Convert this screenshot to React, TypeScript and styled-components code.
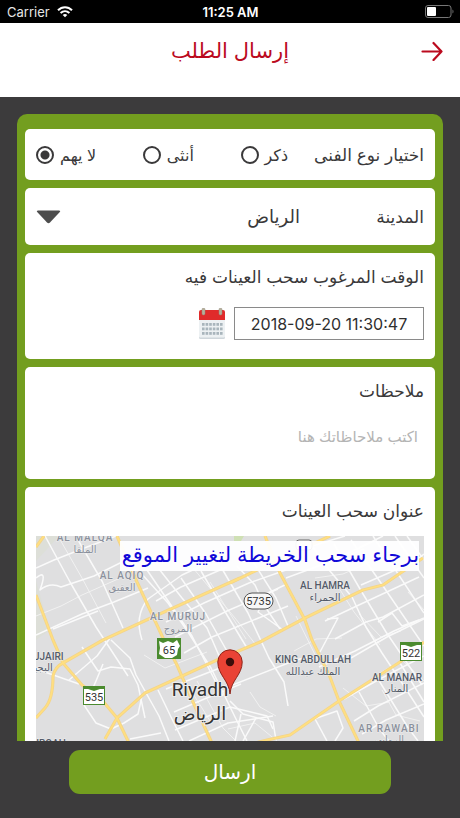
import React, { useState } from 'react';
import styled, { createGlobalStyle } from 'styled-components';

const colors = {
  green: '#739e1f',
  dark: '#3c3b3c',
  red: '#bb0a1e',
  ink: '#3a393a',
  placeholder: '#b4b4b4',
  link: '#1008d8',
};

const GlobalStyle = createGlobalStyle`
  *, *::before, *::after { box-sizing: border-box; }
  body { margin: 0; background: ${colors.dark}; }
  button, input, select, textarea { font: inherit; color: inherit; }
`;

const Screen = styled.div`
  display: flex;
  flex-direction: column;
  height: 100vh;
  overflow: hidden;
  background: ${colors.dark};
  color: ${colors.ink};
  font-family: Inter, 'Noto Sans', 'DejaVu Sans', sans-serif;
  font-size: 17px;
  line-height: 24px;
`;

const StatusBar = styled.div`
  display: grid;
  grid-template-columns: 1fr auto 1fr;
  align-items: center;
  flex: none;
  height: 23px;
  padding: 0 6px 0 7px;
  background: #000;
  color: #fff;
  font-size: 13px;
  line-height: 20px;
`;

const Carrier = styled.span`
  display: flex;
  align-items: center;
  gap: 7px;
  color: #e6e6e6;
`;

const Clock = styled.span`
  font-weight: 600;
`;

const BatteryIcon = styled.svg`
  justify-self: end;
`;

const Header = styled.header`
  display: grid;
  grid-template-columns: 40px 1fr 40px;
  align-items: start;
  flex: none;
  height: 74px;
  padding: 10px 8px;
  background: #fff;
  color: ${colors.red};
`;

const Title = styled.h1`
  grid-column: 2;
  margin: 0;
  text-align: center;
  font-size: 21px;
  font-weight: 400;
  line-height: 36px;
`;

const IconButton = styled.button`
  display: flex;
  align-items: center;
  justify-content: center;
  flex: none;
  padding: 0;
  border: 0;
  background: none;
  cursor: pointer;
`;

const BackButton = styled(IconButton)`
  height: 36px;
`;

const Content = styled.main`
  flex: 1;
  min-height: 0;
  overflow: hidden;
  padding: 17px 17px 0;
`;

const Form = styled.form`
  display: flex;
  flex-direction: column;
  gap: 8px;
  padding: 15px 8px;
  border-radius: 10px;
  background: ${colors.green};
`;

const Card = styled.section<{ $height?: number }>`
  display: flex;
  flex-direction: column;
  flex: none;
  min-height: ${({ $height }) => ($height ? `${$height}px` : 'auto')};
  padding: 12px 11px;
  border-radius: 5px;
  background: #fff;
`;

const RowCard = styled(Card)`
  flex-direction: row;
  align-items: center;
  padding: 0 11px;
`;

const FieldLabel = styled.label`
  display: block;
`;

const GenderLabel = styled.span`
  flex: none;
  margin-left: 26px;
`;

const RadioGroup = styled.div`
  display: flex;
  flex: 1;
  justify-content: space-between;
`;

const RadioOption = styled.label`
  display: flex;
  align-items: center;
  gap: 6px;
  font-size: 16px;
`;

const Radio = styled.input`
  appearance: none;
  width: 18px;
  height: 18px;
  margin: 0;
  border: 2px solid ${colors.ink};
  border-radius: 50%;
  background: #fff;

  &:checked {
    background: radial-gradient(circle, ${colors.ink} 0 4px, #fff 5px);
  }
`;

const CityLabel = styled.label`
  flex: none;
  width: 124px;
`;

const SelectBox = styled.div`
  display: grid;
  flex: 1;
  align-items: center;
`;

const CitySelect = styled.select`
  grid-area: 1 / 1;
  appearance: none;
  width: 100%;
  padding: 0;
  border: 0;
  background: none;
  font-size: 18px;
  line-height: 32px;
`;

const Caret = styled.svg`
  grid-area: 1 / 1;
  justify-self: end;
  pointer-events: none;
`;

const DateRow = styled.div`
  display: flex;
  align-items: center;
  gap: 8px;
  margin-top: 18px;
`;

const DateInput = styled.input`
  width: 190px;
  height: 33px;
  padding: 0;
  border: 1px solid #8a8a8a;
  background: #fff;
  color: #2f2f2f;
  text-align: center;
  font-size: 16px;
`;

const Notes = styled.textarea`
  flex: 1;
  margin-top: 22px;
  padding: 0 6px;
  border: 0;
  background: none;
  resize: none;
  outline: none;
  font-size: 15px;

  &::placeholder { color: ${colors.placeholder}; opacity: 1; }
`;

const MapFrame = styled.div`
  position: relative;
  height: 260px;
  margin-top: 13px;
  overflow: hidden;
  background: #e1e1e2;
`;

const MapHint = styled.p`
  position: absolute;
  top: 5px;
  right: 5px;
  margin: 0;
  padding: 0 0 2px 2px;
  background: #fffffff0;
  color: ${colors.link};
  font-size: 21px;
  line-height: 28px;
`;

const MapSvg = styled.svg`
  display: block;
  width: 100%;
  height: 100%;
`;

const Footer = styled.footer`
  display: flex;
  justify-content: center;
  flex: none;
  padding: 9px 69px 24px;
`;

const SubmitButton = styled.button`
  flex: 1;
  height: 44px;
  padding: 0;
  border: 0;
  border-radius: 11px;
  background: ${colors.green};
  color: #fff;
  font-size: 20px;
  line-height: 32px;
  cursor: pointer;
`;

const highways = [
  'M0 11L8 0',
  'M0 59L17 104L27 127L46 149L66 164L81 182L92 205L112 260',
  'M81 0L101 46L127 102L141 129L157 166L175 205L196 260',
  'M204 42L117 81L67 104L27 127Q19 131 17 140Q17 163 9 172L0 182',
  'M194 47L240 25L294 0',
  'M387 22L366 36L347 49L327 54L269 82L224 106L181 124L144 141L109 157L81 182L69 203',
  'M229 0L244 37L269 84L276 104L294 141L303 165L322 205L344 260',
  'M388 106L364 126L303 165L254 199L231 204L200 212',
];

const streets = [
  'M9 0L34 46L60 91L92 140',
  'M0 42Q12 32 4 54Q14 46 25 51L58 40L98 20',
  'M0 32L18 24L51 11L80 0',
  'M42 4L66 45L87 92',
  'M0 99L46 78L78 66L112 52',
  'M17 93L62 75',
  'M106 104Q98 80 112 63L146 39L174 26',
  'M104 36L132 67L152 96L175 132L199 181L211 205',
  'M111 34L139 75L156 100L187 160',
  'M123 33L146 62L171 92L184 122',
  'M145 42L170 78L196 124',
  'M165 35L188 74L211 112',
  'M185 31L212 77L233 122L248 146L252 170',
  'M120 65L145 51L191 31',
  'M130 86L168 67L213 47L250 34',
  'M139 101L191 75L242 53',
  'M148 117L176 101L252 70',
  'M194 150L260 124L277 120',
  'M0 133L43 148',
  'M33 144L61 120L74 102',
  'M46 111L62 135L75 131L94 133L102 149L109 182',
  'M48 169L60 187L75 193L88 187L102 178L106 160',
  'M67 128L60 145L53 161',
  'M75 104L94 122L100 139L123 180L133 205',
  'M122 154L135 181L147 205',
  'M130 153L184 132',
  'M138 176L166 164L205 148',
  'M139 194L194 171L231 180L237 193',
  'M153 205L192 187L237 180',
  'M194 165L207 178L237 186L240 204',
  'M205 178L199 205',
  'M220 182L207 205',
  'M251 48L232 57L222 76L247 94',
  'M201 30L219 49L228 69L244 93',
  'M216 24L240 62L252 90',
  'M239 26L269 12L309 0',
  'M250 42L288 28L323 12L347 0',
  'M277 11L288 28L316 61L330 91L346 117L366 147L388 181',
  'M298 8L324 53L350 96L386 149',
  'M315 4L347 50L388 110',
  'M337 0L388 77',
  'M359 0L388 42',
  'M371 0L388 24',
  'M288 29L328 13',
  'M325 49L378 26L388 18',
  'M289 85L325 68L383 41',
  'M299 103L330 86L347 81L388 59',
  'M315 122L351 101L388 83',
  'M283 131L319 115L358 95L388 82',
  'M291 83L302 82L284 116',
  'M342 86L356 77L366 90L383 84',
  'M308 163L342 144L388 120',
  'M318 185L342 170L388 147',
  'M326 198L350 184L388 168',
  'M323 156L344 194L353 205',
  'M342 143L371 190L382 205',
  'M364 127L388 166',
  'M278 181L291 205',
  'M278 183L301 175L307 192L299 205',
  'M94 203L125 197',
];

const minorRoads = [
  'M22 0L46 42L70 87',
  'M0 80L25 70L46 59L91 39',
  'M108 119L129 132L171 116',
  'M132 111L149 145L176 188',
  'M161 145L187 192L200 205',
  'M157 32L199 82L220 109',
  'M174 46L210 103',
  'M258 115L280 103L306 102',
  'M260 80L285 131',
  'M303 52L318 76L344 109',
  'M279 42L307 38L338 24',
  'M307 152L330 170L354 166',
  'M346 154L360 179L384 185',
  'M214 156L224 171L240 180',
  'M192 193L219 187L241 205',
  'M323 78L345 101L365 95',
  'M372 56L388 74',
  'M344 137L366 124L388 145',
];

interface Place {
  x: number;
  y: number;
  text: string;
  color: string;
  wide?: boolean;
}

const places: Place[] = [
  { x: 49, y: 5, text: 'AL MALQA', color: '#8a909c', wide: true },
  { x: 49, y: 17, text: 'الملقا', color: '#8a909c' },
  { x: 86, y: 43, text: 'AL AQIQ', color: '#8a909c', wide: true },
  { x: 86, y: 55, text: 'العقيق', color: '#8a909c' },
  { x: 142, y: 84, text: 'AL MURUJ', color: '#8a909c', wide: true },
  { x: 142, y: 96, text: 'المروج', color: '#8a909c' },
  { x: 289, y: 53, text: 'AL HAMRA', color: '#545b69' },
  { x: 289, y: 65, text: 'الحمراء', color: '#545b69' },
  { x: 6, y: 124, text: 'HUJJAIRI', color: '#545b69' },
  { x: 1, y: 135, text: 'البجيري', color: '#545b69' },
  { x: 277, y: 127, text: 'KING ABDULLAH', color: '#545b69' },
  { x: 277, y: 139, text: 'الملك عبدالله', color: '#545b69' },
  { x: 361, y: 145, text: 'AL MANAR', color: '#545b69' },
  { x: 361, y: 156, text: 'المنار', color: '#545b69' },
  { x: 353, y: 196, text: 'AR RAWABI', color: '#8a909c', wide: true },
  { x: 353, y: 207, text: 'الروابي', color: '#8a909c' },
  { x: 15, y: 211, text: 'IRQAH', color: '#545b69' },
];

const PlaceName = styled.text<{ $color: string; $wide?: boolean }>`
  fill: ${({ $color }) => $color};
  stroke: #ededed;
  stroke-width: 1px;
  paint-order: stroke;
  font-family: Roboto, 'Noto Sans', 'DejaVu Sans', sans-serif;
  font-size: 10px;
  font-weight: 500;
  letter-spacing: ${({ $wide }) => ($wide ? '1px' : 'normal')};
  text-anchor: middle;
`;

const CityName = styled.text<{ $size: number }>`
  fill: #333;
  stroke: #ededed;
  stroke-width: 2px;
  paint-order: stroke;
  font-family: Roboto, 'Noto Sans', 'DejaVu Sans', sans-serif;
  font-size: ${({ $size }) => $size}px;
  text-anchor: middle;
`;

const ShieldNumber = styled.text`
  fill: #333;
  font-family: Roboto, sans-serif;
  font-size: 11px;
  text-anchor: middle;
`;

function RiyadhMap() {
  return (
    <MapSvg viewBox="0 0 388 260" preserveAspectRatio="xMidYMin slice" direction="ltr" role="img" aria-label="Riyadh">
      <rect width="388" height="260" fill="#dfdfe0" />
      <path d="M0 0H23L0 25ZM0 45L14 94L0 104Z" fill="#dddfd8" />
      <path d="M198 0h10l-3 5h-7z" fill="#cfe0b4" />
      <g fill="none" stroke="#f1f1f1" strokeWidth="1">
        {minorRoads.map((d) => <path key={d} d={d} />)}
      </g>
      <g fill="none" stroke="#fafafa" strokeWidth="1.5" strokeLinejoin="round">
        {streets.map((d) => <path key={d} d={d} />)}
      </g>
      <g fill="none" stroke="#f3d48a" strokeWidth="3.2" strokeLinejoin="round">
        {highways.map((d) => <path key={d} d={d} />)}
      </g>
      <g fill="none" stroke="#ffdf80" strokeWidth="1.6" strokeLinejoin="round">
        {highways.map((d) => <path key={d} d={d} />)}
      </g>
      {places.map((p) => (
        <PlaceName key={p.text} x={p.x} y={p.y} $color={p.color} $wide={p.wide}>{p.text}</PlaceName>
      ))}
      <rect x="260" y="4" width="16" height="10" rx="3" fill="#fff" stroke="#666" />
      <rect x="208" y="57" width="29" height="16" rx="8" fill="#f7f7f7" stroke="#555" />
      <ShieldNumber x="222.5" y="69">5735</ShieldNumber>
      <rect x="121" y="102" width="24" height="21" fill="#4b8b2f" />
      <path d="M123 105l4 2 5-2 5 2 4-3 3 6-2 3-1 6-5 3h-7l-6-4 1-6z" fill="#fff" />
      <ShieldNumber x="133" y="118">65</ShieldNumber>
      <rect x="47.5" y="150.5" width="21" height="18" fill="#fff" stroke="#4b8b2f" />
      <path d="M47 150h22v3h-5l-6 2-6-2h-5z" fill="#4b8b2f" />
      <ShieldNumber x="58" y="165">535</ShieldNumber>
      <rect x="364.5" y="106.5" width="21" height="18" fill="#fff" stroke="#4b8b2f" />
      <path d="M364 106h22v3h-5l-6 2-6-2h-5z" fill="#4b8b2f" />
      <ShieldNumber x="375" y="121">522</ShieldNumber>
      <CityName x="164" y="160" $size={19}>Riyadh</CityName>
      <CityName x="164" y="184" $size={18}>الرياض</CityName>
      <path
        d="M194 158C193 144 181.800 139 181.800 126A12.200 12.200 0 0 1 206.200 126C206.200 139 195 144 194 158Z"
        fill="#ea4335"
        stroke="#8f2418"
      />
      <circle cx="194" cy="126" r="4.2" fill="#3a0d0a" />
    </MapSvg>
  );
}

function WifiIcon() {
  return (
    <svg width="16" height="12" viewBox="0 0 16 12" fill="none" stroke="#fff" strokeWidth="2" aria-hidden="true">
      <path d="M1 4.300C5 .2 11 .2 15 4.300" />
      <path d="M3.600 7C6.200 4.500 9.800 4.500 12.400 7" />
      <path d="M8 11.300L5.700 9C7 7.700 9 7.700 10.300 9Z" fill="#fff" stroke="none" />
    </svg>
  );
}

function CalendarIcon() {
  const rows = [15, 19.5, 24];
  const cols = [4, 7.6, 11.2, 14.8, 18.4, 22];
  return (
    <svg width="28" height="32" viewBox="0 0 28 32" aria-hidden="true">
      <rect x="1" y="10" width="26" height="21" rx="1.5" fill="#cfd6db" />
      <rect x="1" y="9" width="26" height="20.5" rx="1" fill="#edf1f3" />
      <path d="M1 4a2 2 0 0 1 2-2h22a2 2 0 0 1 2 2v8H1z" fill="#e02b2b" />
      {rows.map((y) => cols.map((x) => (
        <rect key={`${x}-${y}`} x={x} y={y} width="2.6" height="2.8" fill="#a9b5bc" />
      )))}
      <rect x="4" y="0" width="3" height="7" rx="1.5" fill="#b7b09a" stroke="#8f897a" strokeWidth=".5" />
      <rect x="21" y="0" width="3" height="7" rx="1.5" fill="#b7b09a" stroke="#8f897a" strokeWidth=".5" />
    </svg>
  );
}

const genders = [
  { value: 'male', label: 'ذكر' },
  { value: 'female', label: 'أنثى' },
  { value: 'any', label: 'لا يهم' },
];

export default function App() {
  const [gender, setGender] = useState('any');
  const [date, setDate] = useState('2018-09-20 11:30:47');

  return (
    <>
      <GlobalStyle />
      <Screen lang="ar">
        <StatusBar>
          <Carrier>Carrier <WifiIcon /></Carrier>
          <Clock>11:25 AM</Clock>
          <BatteryIcon width="29" height="13" viewBox="0 0 29 13" aria-hidden="true">
            <rect x=".5" y=".5" width="25.5" height="12" rx="2.5" fill="none" stroke="#777" />
            <rect x="2" y="2" width="9" height="9" rx="1" fill="#fff" />
            <path d="M27.500 4.500c1.300.6 1.300 3.400 0 4z" fill="#777" />
          </BatteryIcon>
        </StatusBar>
        <Header>
          <Title dir="rtl">إرسال الطلب</Title>
          <BackButton type="button" aria-label="رجوع">
            <svg width="22" height="20" viewBox="0 0 22 20" fill="none" stroke={colors.red} strokeWidth="2.2" strokeLinecap="round" strokeLinejoin="round" aria-hidden="true">
              <path d="M1.500 10.500H20.500M12.500 2L20.500 10.500L12.500 19" />
            </svg>
          </BackButton>
        </Header>
        <Content dir="rtl">
          <Form id="request" onSubmit={(e) => e.preventDefault()}>
            <RowCard $height={51}>
              <GenderLabel id="gender-label">اختيار نوع الفنى</GenderLabel>
              <RadioGroup role="radiogroup" aria-labelledby="gender-label">
                {genders.map((g) => (
                  <RadioOption key={g.value}>
                    {g.label}
                    <Radio type="radio" name="gender" value={g.value} checked={gender === g.value} onChange={() => setGender(g.value)} />
                  </RadioOption>
                ))}
              </RadioGroup>
            </RowCard>
            <RowCard $height={57}>
              <CityLabel htmlFor="city">المدينة</CityLabel>
              <SelectBox>
                <CitySelect id="city" defaultValue="riyadh">
                  <option value="riyadh">الرياض</option>
                </CitySelect>
                <Caret width="25" height="14" viewBox="0 0 25 14" aria-hidden="true">
                  <path d="M2 .5H23Q25 .5 23.800 2L14 12.500Q12.500 14 11 12.500L1.200 2Q0 .5 2 .5Z" fill="#4d4d4d" />
                </Caret>
              </SelectBox>
            </RowCard>
            <Card $height={106}>
              <FieldLabel htmlFor="date">الوقت المرغوب سحب العينات فيه</FieldLabel>
              <DateRow>
                <DateInput id="date" dir="ltr" value={date} onChange={(e) => setDate(e.target.value)} />
                <IconButton type="button" aria-label="اختيار التاريخ"><CalendarIcon /></IconButton>
              </DateRow>
            </Card>
            <Card $height={112}>
              <FieldLabel htmlFor="notes">ملاحظات</FieldLabel>
              <Notes id="notes" rows={1} placeholder="اكتب ملاحاظاتك هنا" />
            </Card>
            <Card>
              <FieldLabel as="span">عنوان سحب العينات</FieldLabel>
              <MapFrame>
                <RiyadhMap />
                <MapHint>برجاء سحب الخريطة لتغيير الموقع</MapHint>
              </MapFrame>
            </Card>
          </Form>
        </Content>
        <Footer>
          <SubmitButton type="submit" form="request">ارسال</SubmitButton>
        </Footer>
      </Screen>
    </>
  );
}
